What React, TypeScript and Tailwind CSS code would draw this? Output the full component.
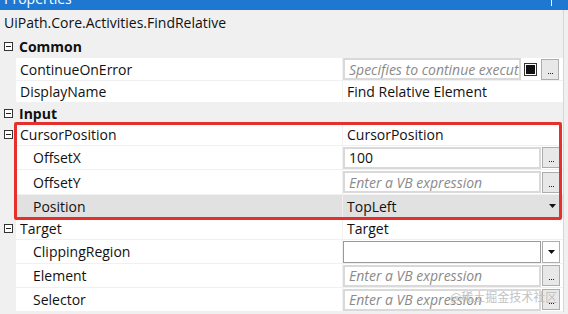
import React from "react";

type RowProps = {
  name: string;
  indent?: boolean;
  toggle?: boolean;
  selected?: boolean;
  h: string;
  children?: React.ReactNode;
};

const Toggle = () => (
  <span className="flex h-[9px] w-[9px] items-center justify-center border border-[#333] bg-white">
    <span className="h-px w-[5px] bg-[#222]" />
  </span>
);

const DotsButton = () => (
  <div className="ml-px flex h-[21px] w-[18px] shrink-0 items-end justify-center gap-px border border-[#adadad] bg-[#e8e8e8] pb-[5px]">
    <span className="h-px w-px bg-[#222]" />
    <span className="h-px w-px bg-[#222]" />
    <span className="h-px w-px bg-[#222]" />
  </div>
);

const Arrow = () => (
  <svg width="7" height="4" viewBox="0 0 7 4">
    <path d="M0 0h7L3.5 4z" fill="#111" />
  </svg>
);

const Row = ({ name, indent, toggle, selected, h, children }: RowProps) => (
  <div className={`flex ${h} border-b border-[#f0f0f0]`}>
    <div className="flex w-[16px] shrink-0 items-center justify-start bg-[#f0f0f0] pl-[4px]">
      {toggle && <Toggle />}
    </div>
    <div
      className={`flex w-[327px] shrink-0 items-center border-r border-[#f0f0f0] ${indent ? "pl-[17px]" : "pl-[4px]"} ${selected ? "bg-[#e1e1e1]" : "bg-white"}`}
    >
      {name}
    </div>
    <div className={`flex min-w-0 flex-1 items-center ${selected ? "bg-[#e1e1e1]" : "bg-white"}`}>{children}</div>
  </div>
);

const Category = ({ name, h }: { name: string; h: string }) => (
  <div className={`flex ${h} items-center gap-[6px] bg-[#f0f0f0] pl-[4px] font-bold`}>
    <Toggle />
    <span>{name}</span>
  </div>
);

const ExprInput = ({ value, placeholder, w = "w-[198px]" }: { value?: string; placeholder?: string; w?: string }) => (
  <div className={`flex h-[22px] ${w} shrink-0 items-center overflow-hidden border-2 border-[#d9d9d9] bg-white pl-[4px]`}>
    {value ? (
      <span className="text-[#111]">{value}</span>
    ) : (
      <span className="whitespace-nowrap italic text-[#8a8a8a]">{placeholder}</span>
    )}
  </div>
);

export default function App() {
  return (
    <div
      className="relative h-[314px] w-[568px] overflow-hidden bg-[#f0f0f0] text-[14px] text-[#111]"
      style={{ fontFamily: '"Open Sans", "Noto Sans", sans-serif' }}
    >
      <div className="relative h-[10px] overflow-hidden bg-[#1e78d2]">
        <span className="absolute left-[4px] top-[-12px] text-[14px] text-white">Properties</span>
        <span className="absolute right-[16px] top-0 h-[6px] w-px bg-white" />
      </div>
      <div className="w-[564px] border-r border-[#d6d6d6]">
        <div className="flex h-[24px] items-center pl-[4px]">UiPath.Core.Activities.FindRelative</div>
        <Category name="Common" h="h-[24px]" />
        <Row name="ContinueOnError" h="h-[23px]">
          <ExprInput placeholder="Specifies to continue execution" w="w-[178px]" />
          <div className="ml-[3px] flex h-[13px] w-[13px] items-center justify-center border border-[#333] bg-white">
            <span className="h-[9px] w-[9px] bg-[#111]" />
          </div>
          <div className="ml-[3px]">
            <DotsButton />
          </div>
        </Row>
        <Row name="DisplayName" h="h-[22px]">
          <span className="pl-[4px]">Find Relative Element</span>
        </Row>
        <Category name="Input" h="h-[21px]" />
        <div className="relative">
          <Row name="CursorPosition" toggle h="h-[22px]">
            <span className="pl-[4px]">CursorPosition</span>
          </Row>
          <Row name="OffsetX" indent h="h-[24px]">
            <ExprInput value="100" />
            <DotsButton />
          </Row>
          <Row name="OffsetY" indent h="h-[25px]">
            <ExprInput placeholder="Enter a VB expression" />
            <DotsButton />
          </Row>
          <Row name="Position" indent selected h="h-[23px]">
            <div className="flex flex-1 items-center justify-between pl-[4px] pr-[7px]">
              <span>TopLeft</span>
              <Arrow />
            </div>
          </Row>
          <div className="pointer-events-none absolute left-[14px] top-[-2px] h-[98px] w-[548px] rounded-[2px] border-[3px] border-[#e5302b]" />
        </div>
        <Row name="Target" toggle h="h-[22px]">
          <span className="pl-[4px]">Target</span>
        </Row>
        <Row name="ClippingRegion" indent h="h-[24px]">
          <div className="h-[22px] w-[198px] shrink-0 border border-[#9a9a9a] bg-white" />
          <div className="ml-px flex h-[22px] w-[18px] items-center justify-center border border-[#adadad] bg-white">
            <Arrow />
          </div>
        </Row>
        <Row name="Element" indent h="h-[24px]">
          <ExprInput placeholder="Enter a VB expression" />
          <DotsButton />
        </Row>
        <Row name="Selector" indent h="h-[24px]">
          <ExprInput placeholder="Enter a VB expression" />
          <DotsButton />
        </Row>
      </div>
      <span
        className="pointer-events-none absolute left-[450px] top-[291px] whitespace-nowrap text-[12px] leading-none text-[#c2c2c2]"
        style={{ fontFamily: '"Noto Sans CJK SC", sans-serif' }}
      >
        @稀土掘金技术社区
      </span>
    </div>
  );
}
